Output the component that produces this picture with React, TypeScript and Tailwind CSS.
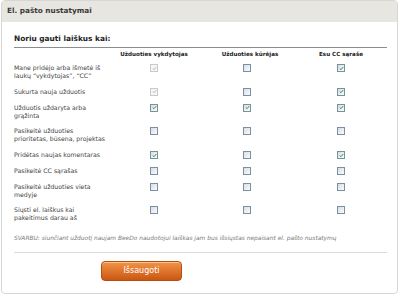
import React from "react";

type Box = "on" | "off" | "lockedOn";

const rows: { label: string; boxes: [Box, Box, Box] }[] = [
  { label: "Mane pridėjo arba išmetė iš laukų \u201cvykdytojas\u201d, \u201cCC\u201d", boxes: ["lockedOn", "off", "on"] },
  { label: "Sukurta nauja užduotis", boxes: ["lockedOn", "off", "on"] },
  { label: "Užduotis uždaryta arba grąžinta", boxes: ["on", "on", "on"] },
  { label: "Pasikeitė užduoties prioritetas, būsena, projektas", boxes: ["off", "off", "off"] },
  { label: "Pridėtas naujas komentaras", boxes: ["on", "off", "on"] },
  { label: "Pasikeitė CC sąrašas", boxes: ["off", "off", "off"] },
  { label: "Pasikeitė užduoties vieta medyje", boxes: ["off", "off", "off"] },
  { label: "Siųsti el. laiškus kai pakeitimus darau aš", boxes: ["off", "off", "off"] },
];

function Check({ state }: { state: Box }) {
  const locked = state === "lockedOn";
  const checked = state !== "off";
  return (
    <span
      className={`relative inline-block w-[8px] h-[8px] border ${
        locked
          ? "border-[#c9c9c9] bg-[#f6f6f6]"
          : "border-[#7a8ea6] bg-gradient-to-br from-[#d9dde2] to-[#fbfbfb]"
      }`}
    >
      {checked && (
        <svg viewBox="0 0 7 7" className="absolute left-[0.5px] top-[0.5px] w-[5px] h-[5px]">
          <path
            d="M1 3.5 L2.8 5.2 L6 1.4"
            fill="none"
            stroke={locked ? "#b9b9b9" : "#2aa52a"}
            strokeWidth="1.4"
          />
        </svg>
      )}
    </span>
  );
}

export default function App() {
  return (
    <div className="w-[400px] h-[296px] bg-white pt-0 pl-[1px] pr-[2px] pb-[2px] font-['DejaVu_Sans',Verdana,sans-serif]">
      <div className="h-full border border-[#d6d6d6] rounded-[4px] overflow-hidden bg-white">
        {/* title bar */}
        <div className="h-[21px] bg-[#e8e6e1] flex items-center pl-[5px] text-[7.3px] font-bold text-[#3a3a3a]">
          El. pašto nustatymai
        </div>

        <div className="pl-[12px] pr-[10px]">
          <div className="pt-[12px] pb-[4px] text-[7.4px] leading-[9px] font-bold text-[#222] border-b border-[#8c8c8c]">
            Noriu gauti laiškus kai:
          </div>

          <div className="grid grid-cols-[106px_68px_118px_70px] text-[6.2px] leading-[8px] text-[#444]">
            <div className="h-[12px]" />
            <div className="h-[12px] flex items-center justify-center text-[5.6px] font-bold text-[#222]">Užduoties vykdytojas</div>
            <div className="h-[12px] flex items-center justify-center text-[5.6px] font-bold text-[#222] pl-[6px]">Užduoties kūrėjas</div>
            <div className="h-[12px] flex items-center justify-center text-[5.6px] font-bold text-[#222]">Esu CC sąraše</div>

            {rows.map((r) => (
              <React.Fragment key={r.label}>
                <div className="pt-[4px] pb-[3.75px] pr-[11px]">{r.label}</div>
                {r.boxes.map((b, i) => (
                  <div key={i} className="pt-[4px] flex justify-center">
                    <div className="h-[8px] flex items-center">
                      <Check state={b} />
                    </div>
                  </div>
                ))}
              </React.Fragment>
            ))}
          </div>

          <div className="pt-[8px] pb-[10px] text-[5.9px] leading-[8px] italic text-[#7a7a7a] border-b border-[#dcdcdc]">
            SVARBU: siunčiant užduotį naujam BeeDo naudotojui laiškas jam bus išsiųstas nepaisant el. pašto nustatymų
          </div>

          <div className="pt-[8px] pl-[87px]">
            <button className="w-[81px] h-[20px] rounded-[4px] border border-[#b94c0c] bg-gradient-to-b from-[#f29446] to-[#c9570f] shadow-[inset_0_1px_0_rgba(255,255,255,0.45)] text-white text-[8px] flex items-center justify-center">
              Išsaugoti
            </button>
          </div>
        </div>
      </div>
    </div>
  );
}
